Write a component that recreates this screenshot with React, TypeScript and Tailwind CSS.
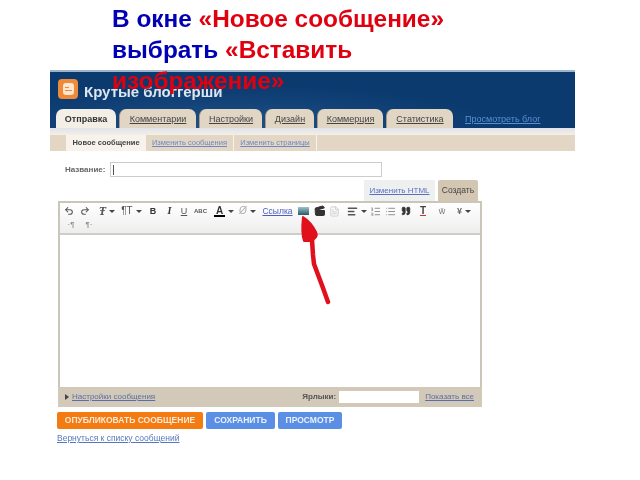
import React from "react";
import { Undo2, Redo2, List, ListOrdered, AlignLeft, Quote, Clapperboard, FileText } from "lucide-react";

const Caret = () => <span className="ml-[3px] inline-block h-0 w-0 border-x-[3px] border-t-[3px] border-x-transparent border-t-[#444]" />;

function Slot({ w, children }: { w: number; children?: React.ReactNode }) {
  return <span style={{ width: w }} className="flex shrink-0 items-center justify-center">{children}</span>;
}

const tabs: [string, string][] = [
  ["Комментарии", "w-[77px]"],
  ["Настройки", "w-[63px]"],
  ["Дизайн", "w-[49px]"],
  ["Коммерция", "w-[66px]"],
  ["Статистика", "w-[67px]"],
];

const G = "text-[10px] leading-none text-[#555]";

export default function App() {
  return (
    <div className="relative h-[480px] w-[640px] overflow-hidden bg-white font-['Liberation_Sans',Arial,sans-serif]">
      <div className="relative z-10 h-[70px] whitespace-nowrap pl-[112px] pt-[3px] text-[24.4px] font-bold leading-[31px] blur-[0.3px]">
        <span className="text-[#0000b4]">В окне </span>
        <span className="text-[#e0000f]">«Новое сообщение»</span>
        <br />
        <span className="text-[#0000b4]">выбрать </span>
        <span className="text-[#e0000f]">«Вставить</span>
        <br />
        <span className="text-[#e0000f]">изображение»</span>
      </div>

      <div className="relative ml-[50px] w-[525px] blur-[0.6px]">
        {/* Header */}
        <div className="relative h-[58px] border-t-2 border-[#9db4cc] bg-[radial-gradient(ellipse_at_35%_100%,#1f5088_0%,#0a3a6e_55%)]">
          <div className="flex items-center pl-[8px] pt-[7px]">
            <div className="flex h-[20px] w-[20px] items-center justify-center rounded-[4px] bg-[#ee8a3a]">
              <div className="flex h-[12px] w-[11px] flex-col justify-center gap-[2px] rounded-[3px] bg-[#fbe6cf] px-[2px]">
                <span className="h-px w-[4px] bg-[#ee8a3a]" />
                <span className="h-px w-[7px] bg-[#ee8a3a]" />
              </div>
            </div>
            <span className="ml-[6px] mt-[4px] text-[15px] font-bold leading-none text-[#dce6f0]">Крутые блоггерши</span>
          </div>
          <div className="absolute bottom-0 left-[6px] flex items-end gap-[3px]">
            <div className="flex h-[19px] w-[60px] justify-center rounded-t-[7px] bg-[#f4efe6] pt-[4px] text-[9px] font-bold text-[#333]">Отправка</div>
            {tabs.map(([t, w]) => (
              <div key={t} className={`flex h-[19px] justify-center rounded-t-[7px] border-l border-[#a99b85] bg-[#e1d6c3] pt-[4px] text-[9px] text-[#444] underline ${w}`}>{t}</div>
            ))}
            <div className="flex h-[19px] pl-[9px] pt-[4px] text-[9px] text-[#5b8fd0] underline">Просмотреть блог</div>
          </div>
        </div>
        {/* Sub nav */}
        <div className="h-[7px] bg-gradient-to-b from-[#dfe3ea] to-[#f4efe6]" />
        <div className="flex h-[16px] items-center bg-[#e3d6c4] text-[7.5px]">
          <div className="h-full w-[16px]" />
          <div className="flex h-full w-[80px] items-center justify-center bg-[#f7f3ec] font-bold text-[#444]">Новое сообщение</div>
          <div className="flex h-full w-[88px] items-center justify-center border-r border-[#f7f3ec] text-[#6d88c4] underline">Изменить сообщения</div>
          <div className="flex h-full w-[83px] items-center justify-center border-r border-[#f7f3ec] text-[#6d88c4] underline">Изменить страницы</div>
        </div>

        {/* Title row */}
        <div className="flex h-[26px] items-end pl-[15px]">
          <span className="w-[45px] pb-[1px] text-[8px] font-bold text-[#666]">Название:</span>
          <div className="flex h-[15px] w-[272px] items-center border border-[#ccc] bg-white pl-[2px]">
            <span className="h-[10px] w-px bg-[#555]" />
          </div>
        </div>

        {/* Mode tabs */}
        <div className="flex h-[24px] items-end justify-end gap-[3px] pr-[97px]">
          <div className="flex h-[21px] w-[71px] items-center justify-center bg-[#eef0f0] text-[8px] text-[#5a6fc0] underline">Изменить HTML</div>
          <div className="flex h-[21px] w-[40px] items-center justify-center rounded-t-[2px] bg-[#d3c6b2] text-[8.5px] text-[#444]">Создать</div>
        </div>

        {/* Editor */}
        <div className="ml-[8px] w-[424px] border-2 border-b-0 border-[#cbc6ba]">
          <div className="h-[32px] border-b-2 border-[#cfcdc8] bg-gradient-to-b from-white to-[#eeeeee] pl-[2px]">
            <div className="flex h-[16px] items-center text-[#555]">
              <Slot w={14}><Undo2 size={10} strokeWidth={2.5} /></Slot>
              <Slot w={18}><Redo2 size={10} strokeWidth={2.5} /></Slot>
              <Slot w={26}><span className="font-['Liberation_Serif',serif] text-[12px] font-bold italic leading-none">Ŧ</span><Caret /></Slot>
              <Slot w={23}><span className={G}>¶T</span><Caret /></Slot>
              <Slot w={20}><span className="text-[9px] font-bold leading-none text-[#333]">B</span></Slot>
              <Slot w={13}><span className="font-['Liberation_Serif',serif] text-[10px] font-bold italic leading-none text-[#333]">I</span></Slot>
              <Slot w={16}><span className="text-[9px] leading-none underline">U</span></Slot>
              <Slot w={17}><span className="text-[6px] font-bold leading-none">ABC</span></Slot>
              <Slot w={4} />
              <Slot w={22}>
                <span className="flex flex-col items-center text-[10px] font-bold leading-[9px] text-[#333]">A<span className="h-[2px] w-[11px] bg-black" /></span><Caret />
              </Slot>
              <Slot w={25}><span className="text-[10px] italic leading-none text-[#aaa]">Ø</span><Caret /></Slot>
              <Slot w={35}><span className="text-[8.5px] text-[#4b5fbf] underline">Ссылка</span></Slot>
              <Slot w={17}>
                <span className="h-[8px] w-[11px] bg-gradient-to-b from-[#9cc4cf] to-[#2f5866]" />
              </Slot>
              <Slot w={15}><Clapperboard size={12} className="text-[#333]" fill="#333" /></Slot>
              <Slot w={15}><FileText size={11} className="text-[#ccc]" /></Slot>
              <Slot w={3} />
              <Slot w={23}><AlignLeft size={11} strokeWidth={3} className="text-[#555]" /><Caret /></Slot>
              <Slot w={15}><ListOrdered size={11} className="text-[#888]" /></Slot>
              <Slot w={15}><List size={11} className="text-[#888]" /></Slot>
              <Slot w={15}><Quote size={10} fill="#333" className="text-[#333]" /></Slot>
              <Slot w={20}><span className="text-[10px] font-bold leading-none text-[#444] underline decoration-[#c33]">T</span></Slot>
              <Slot w={18}><span className="text-[9px] leading-none text-[#777]">ẅ</span></Slot>
              <Slot w={26}><span className="text-[9px] font-bold leading-none text-[#666]">¥</span><Caret /></Slot>
            </div>
            <div className="flex h-[12px] items-center pl-[2px] text-[#888]">
              <Slot w={14}><span className="text-[8px] leading-none">·¶</span></Slot>
              <Slot w={22}><span className="text-[8px] leading-none">¶·</span></Slot>
            </div>
          </div>
          <div className="h-[152px] bg-white" />
        </div>
        <div className="ml-[8px] flex h-[20px] w-[424px] items-center justify-between bg-[#d3c9b8] pl-[7px] pr-[8px] text-[8px]">
          <div className="flex items-center gap-[3px]">
            <span className="h-0 w-0 border-y-[3px] border-l-[4px] border-y-transparent border-l-[#444]" />
            <span className="text-[#5a6fa8] underline">Настройки сообщения</span>
          </div>
          <div className="flex items-center">
            <span className="mr-[3px] font-bold text-[#555]">Ярлыки:</span>
            <span className="mr-[6px] h-[12px] w-[80px] bg-white" />
            <span className="text-[#5a6fa8] underline">Показать все</span>
          </div>
        </div>

        {/* Buttons */}
        <div className="ml-[7px] mt-[5px] flex gap-[3px] text-[8.5px] font-bold leading-none text-[#ffe9d6]">
          <div className="flex h-[17px] w-[146px] items-center justify-center rounded-[2px] bg-[#f47a12]">ОПУБЛИКОВАТЬ СООБЩЕНИЕ</div>
          <div className="flex h-[17px] w-[69px] items-center justify-center rounded-[2px] bg-[#5b8fe6] text-[#eaf1fb]">СОХРАНИТЬ</div>
          <div className="flex h-[17px] w-[64px] items-center justify-center rounded-[2px] bg-[#5b8fe6] text-[#eaf1fb]">ПРОСМОТР</div>
        </div>
        <div className="ml-[7px] mt-[3px] text-[8.5px] leading-[12px] text-[#5577c0] underline">Вернуться к списку сообщений</div>

        {/* Hand-drawn arrow */}
        <svg className="absolute left-[240px] top-[140px]" width="50" height="100" viewBox="0 0 50 100">
          <path d="M13 7 C12 16 12 25 14 31 L21 31 C26 28 28 26 26 22 C23 16 18 10 13 7 Z" fill="#e0101c" stroke="#e0101c" strokeWidth="2" strokeLinejoin="round" />
          <path d="M22 30 L23 45 L24 54 L30 70 L33 78 L38 92" fill="none" stroke="#e0101c" strokeWidth="4.5" strokeLinecap="round" strokeLinejoin="round" />
        </svg>
      </div>
    </div>
  );
}
